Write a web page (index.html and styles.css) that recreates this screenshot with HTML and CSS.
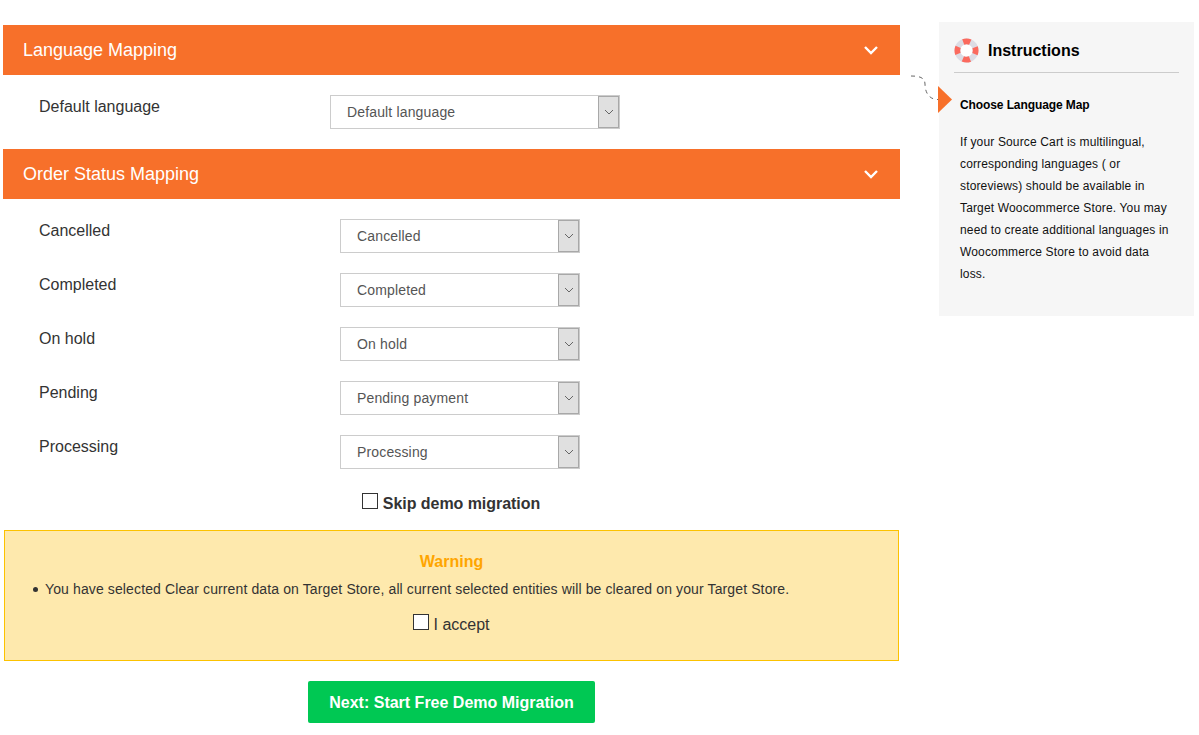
FILE: index.html
```html
<!DOCTYPE html>
<html lang="en">
<head>
<meta charset="utf-8">
<title>Migration configuration</title>
<link rel="stylesheet" href="styles.css">
</head>
<body>
<div class="page">
  <main class="main">
    <section>
      <div class="bar"><span>Language Mapping</span>
        <svg class="chev" width="16" height="10" viewBox="0 0 16 10"><path d="M2 2l6 6 6-6" fill="none" stroke="#fff" stroke-width="2.4"/></svg>
      </div>
      <div class="rows lang">
        <div class="row">
          <label class="lbl">Default language</label>
          <div class="select wide"><span class="val">Default language</span><span class="arrow"><svg width="10" height="6" viewBox="0 0 10 6"><path d="M1 1l4 4 4-4" fill="none" stroke="#666" stroke-width="1"/></svg></span></div>
        </div>
      </div>
    </section>
    <section>
      <div class="bar"><span>Order Status Mapping</span>
        <svg class="chev" width="16" height="10" viewBox="0 0 16 10"><path d="M2 2l6 6 6-6" fill="none" stroke="#fff" stroke-width="2.4"/></svg>
      </div>
      <div class="rows">
        <div class="row"><label class="lbl">Cancelled</label><div class="select"><span class="val">Cancelled</span><span class="arrow"><svg width="10" height="6" viewBox="0 0 10 6"><path d="M1 1l4 4 4-4" fill="none" stroke="#666" stroke-width="1"/></svg></span></div></div>
        <div class="row"><label class="lbl">Completed</label><div class="select"><span class="val">Completed</span><span class="arrow"><svg width="10" height="6" viewBox="0 0 10 6"><path d="M1 1l4 4 4-4" fill="none" stroke="#666" stroke-width="1"/></svg></span></div></div>
        <div class="row"><label class="lbl">On hold</label><div class="select"><span class="val">On hold</span><span class="arrow"><svg width="10" height="6" viewBox="0 0 10 6"><path d="M1 1l4 4 4-4" fill="none" stroke="#666" stroke-width="1"/></svg></span></div></div>
        <div class="row"><label class="lbl">Pending</label><div class="select"><span class="val">Pending payment</span><span class="arrow"><svg width="10" height="6" viewBox="0 0 10 6"><path d="M1 1l4 4 4-4" fill="none" stroke="#666" stroke-width="1"/></svg></span></div></div>
        <div class="row"><label class="lbl">Processing</label><div class="select"><span class="val">Processing</span><span class="arrow"><svg width="10" height="6" viewBox="0 0 10 6"><path d="M1 1l4 4 4-4" fill="none" stroke="#666" stroke-width="1"/></svg></span></div></div>
      </div>
    </section>
    <div class="skip"><span class="check"></span><b>Skip demo migration</b></div>
    <div class="warning">
      <div class="warn-title">Warning</div>
      <ul class="warn-list"><li>You have selected Clear current data on Target Store, all current selected entities will be cleared on your Target Store.</li></ul>
      <div class="accept"><span class="check"></span><span>I accept</span></div>
    </div>
    <div class="actions"><a class="next">Next: Start Free Demo Migration</a></div>
  </main>
  <aside class="side">
    <svg class="connector" width="42" height="40" viewBox="0 0 42 40">
      <path d="M1 1C8 1 15 2 15 9C15 16 18 24.500 28 24.500" fill="none" stroke="#666" stroke-width="1" stroke-dasharray="4 4"/>
      <path d="M28 11L42 24.500L28 38Z" fill="#f7702a"/>
    </svg>
    <div class="side-head">
      <svg width="25" height="25" viewBox="0 0 26 26">
        <circle cx="13" cy="13" r="9.500" fill="#fff" stroke="#dcdce4" stroke-width="6"/>
        <circle cx="13" cy="13" r="9.500" fill="none" stroke="#fb6a5e" stroke-width="6" stroke-dasharray="7.500 7.423" stroke-dashoffset="3.750"/>
      </svg>
      <h2>Instructions</h2>
    </div>
    <h3>Choose Language Map</h3>
    <p>If your Source Cart is multilingual, corresponding languages ( or storeviews) should be available in Target Woocommerce Store. You may need to create additional languages in Woocommerce Store to avoid data loss.</p>
  </aside>
</div>
</body>
</html>
```
FILE: styles.css
```css
* { box-sizing: border-box; }
html, body { margin: 0; padding: 0; background: #fff; }
body { font-family: "Liberation Sans", Arial, sans-serif; color: #333; }
.page { display: flex; align-items: flex-start; width: 1199px; height: 735px; overflow: hidden; padding-left: 3px; }
.main { width: 897px; padding-top: 25px; flex: none; }
.bar { height: 50px; background: #f7702a; color: #fff; font-size: 18px; display: flex; align-items: center; justify-content: space-between; padding: 0 21px 0 20px; }
.chev { display: block; }
.rows { display: flex; flex-direction: column; gap: 20px; padding: 20px 0 20px 36px; }
.row { display: flex; height: 34px; }
.lbl { width: 301px; font-size: 16px; line-height: 24px; flex: none; }
.lang .lbl { width: 291px; }
.select { width: 240px; height: 34px; border: 1px solid #ccc; display: flex; justify-content: space-between; font-size: 14px; letter-spacing: 0.15px; color: #555; background: #fff; }
.select.wide { width: 290px; }
.val { padding-left: 16px; line-height: 32px; }
.arrow { width: 21px; background: #e0e0e0; border: 1px solid #a8a8a8; display: flex; align-items: center; justify-content: center; }
.skip { display: flex; align-items: center; justify-content: center; height: 32px; font-size: 16px; letter-spacing: -0.05px; margin-top: -1px; padding-right: 1px; }
.skip b { color: #333; margin-left: 5px; }
.check { width: 16px; height: 16px; border: 1px solid #333; background: #fff; display: block; flex: none; }
.skip .check { margin-top: -7px; }
.warning { margin: 10px 1px 0 1px; height: 131px; background: #fee9ad; border: 1px solid #fcc200; padding-top: 21px; }
.warn-title { text-align: center; font-size: 16px; font-weight: bold; color: #ffa500; line-height: 20px; }
.warn-list { margin: 7px 0 0; padding: 0 0 0 28px; font-size: 14px; line-height: 20px; letter-spacing: 0.12px; list-style: none; }
.warn-list li { display: flex; align-items: center; gap: 7px; }
.warn-list li::before { content: ""; width: 5px; height: 5px; border-radius: 50%; background: #333; flex: none; }
.accept { display: flex; justify-content: center; align-items: center; margin-top: 15px; font-size: 16px; line-height: 22px; }
.accept .check { margin-right: 4px; margin-top: -7px; }
.actions { display: flex; justify-content: center; margin-top: 20px; }
.next { width: 287px; height: 42px; padding-top: 1px; background: #00c853; color: #fff; font-size: 16px; font-weight: bold; border-radius: 2px; display: flex; align-items: center; justify-content: center; }
.side { position: relative; width: 255px; height: 294px; margin: 22px 0 0 39px; background: #f6f6f6; padding: 15px 15px 0; flex: none; color: #000; }
.connector { position: absolute; left: -29px; top: 53px; overflow: visible; }
.side-head { display: flex; align-items: center; gap: 9px; height: 36px; padding-bottom: 8px; border-bottom: 1px solid #ccc; width: 225px; }
.side-head h2 { margin: 0; font-size: 16px; font-weight: bold; color: #000; }
.side h3 { margin: 24px 0 0 6px; font-size: 12px; line-height: 16px; font-weight: bold; letter-spacing: -0.1px; color: #000; }
.side p { margin: 18px 0 0 6px; font-size: 12px; line-height: 22px; letter-spacing: 0.15px; color: #111; width: 215px; }
```
